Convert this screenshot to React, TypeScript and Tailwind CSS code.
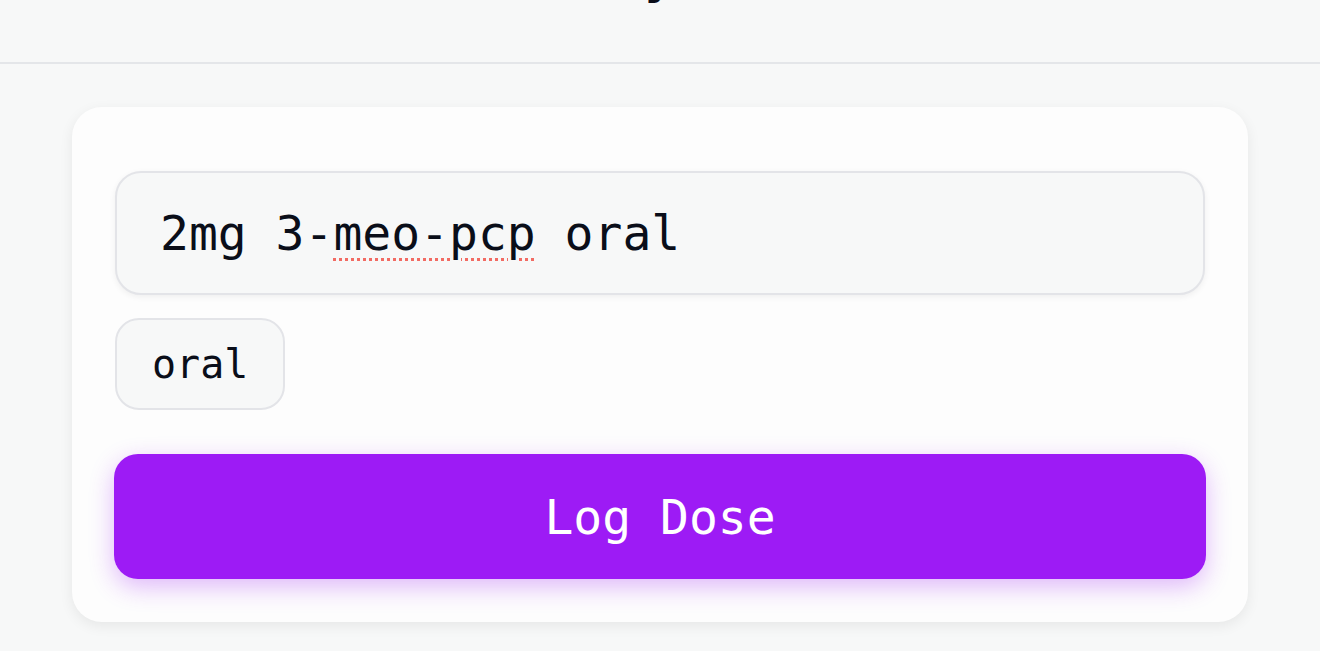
export default function App(): JSX.Element {
  const mono = "font-['DejaVu_Sans_Mono','Liberation_Mono',monospace]";
  return (
    <div className={`min-h-[651px] w-full bg-[#f7f8f8] text-[#0a0e19] ${mono}`}>
      <header className="h-[64px] border-b-2 border-[#e4e6e9] flex justify-center">
        <h1 className="-mt-[48px] text-[48px] leading-[48px] font-bold">Daily Use</h1>
      </header>

      <main className="px-[72px] pt-[43px]">
        <div className="bg-[#fdfdfd] rounded-[30px] shadow-[0_4px_14px_rgba(0,0,0,0.07)] px-[43px] pt-[64px] pb-[43px] flex flex-col">
          <div className="h-[124px] rounded-[26px] border-2 border-[#e3e4e8] bg-[#f7f8f8] shadow-[0_2px_6px_rgba(0,0,0,0.06)] flex items-center px-[43px] text-[48px] whitespace-pre">
            <span>2mg 3-</span>
            <span className="underline decoration-dotted decoration-[#f26b63] decoration-[3px] underline-offset-[8px]">meo-pcp</span>
            <span> oral</span>
          </div>

          <div className="mt-[23px] flex">
            <button className="h-[92px] px-[35px] rounded-[24px] border-2 border-[#e3e4e8] bg-[#f7f8f8] text-[40px] text-[#0a0e19]">
              oral
            </button>
          </div>

          <button className="-mx-px mt-[44px] h-[125px] rounded-[24px] bg-[#9d1bf5] text-white text-[48px] shadow-[0_8px_24px_rgba(157,27,245,0.3)]">
            Log Dose
          </button>
        </div>
      </main>
    </div>
  );
}
